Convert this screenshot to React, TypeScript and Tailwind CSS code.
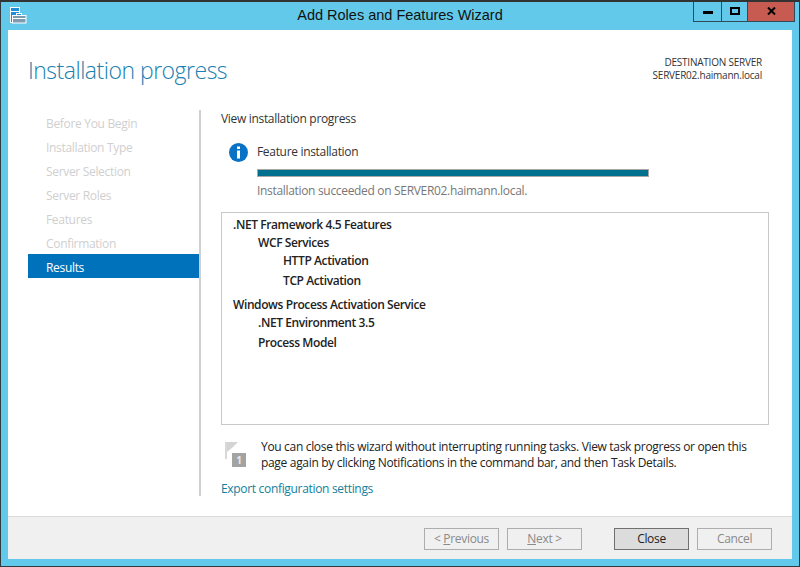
import React from "react";

const steps = [
  "Before You Begin",
  "Installation Type",
  "Server Selection",
  "Server Roles",
  "Features",
  "Confirmation",
];

const AppIcon = () => (
  <svg width="17" height="17" viewBox="0 0 17 17" className="block">
    <rect x="0.5" y="0.5" width="9" height="15" fill="#1f8fd8" stroke="#fff" />
    <rect x="1" y="4" width="8" height="1" fill="#fff" />
    <rect x="2.5" y="8.5" width="13.5" height="7.5" fill="#7f9bb0" stroke="#fff" />
    <rect x="6.5" y="6.5" width="5" height="2" fill="#1f8fd8" stroke="#fff" />
    <rect x="3" y="11" width="13" height="1" fill="#fff" />
  </svg>
);

const InfoIcon = () => (
  <svg width="19" height="19" viewBox="0 0 19 19" className="block">
    <circle cx="9.5" cy="9.5" r="9.5" fill="#0a72c4" />
    <rect x="8" y="3.5" width="3" height="2.5" fill="#fff" />
    <rect x="8" y="7.5" width="3" height="8" fill="#fff" />
  </svg>
);

const FlagIcon = () => (
  <svg width="22" height="27" viewBox="0 0 22 27" className="block">
    <rect x="0" y="1" width="2" height="17" fill="#d8d8d8" />
    <path d="M2 1 L13 1 L8 6 L2 11 Z" fill="#d4d4d4" />
    <rect x="7" y="12" width="14" height="14" fill="#a3a3a3" />
    <text x="14" y="23" textAnchor="middle" fontSize="10" fontWeight="700" fill="#e8e8e8" fontFamily="Open Sans">1</text>
  </svg>
);

const WizardButton = ({ children, primary }: { children: React.ReactNode; primary?: boolean }) => (
  <button
    className={
      primary
        ? "w-[75px] h-[22px] border border-[#707070] bg-[#dcdcdc] text-[12px] tracking-[-0.32px] text-[#222] leading-none"
        : "w-[75px] h-[22px] border border-[#adadad] bg-[#f0f0f0] text-[12px] tracking-[-0.32px] text-[#8a8a8a] leading-none"
    }
  >
    {children}
  </button>
);

const App = () => {
  return (
    <div className="w-[800px] h-[567px] flex flex-col bg-[#63c9ea] border-x border-b border-[#2f3b40] border-t-2 border-t-[#333] font-['Open_Sans',sans-serif] overflow-hidden">
      <div className="relative h-[28px] flex items-center justify-center shrink-0">
        <div className="absolute left-[9px] top-[5px]">
          <AppIcon />
        </div>
        <span className="text-[14.5px] text-[#111] font-['Liberation_Sans',sans-serif] mb-px">Add Roles and Features Wizard</span>
        <div className="absolute right-[4px] top-[-2px] flex h-[22px] border border-t-0 border-[#2f4a58]">
          <div className="w-[28px] flex items-center justify-center border-r border-[#2f4a58]">
            <div className="w-[10px] h-[3px] bg-black mt-[4px]" />
          </div>
          <div className="w-[26px] flex items-center justify-center border-r border-[#2f4a58]">
            <div className="w-[10px] h-[8px] border-2 border-black" />
          </div>
          <div className="w-[46px] flex items-center justify-center bg-[#c75b51]">
            <svg width="9" height="8" viewBox="0 0 9 8">
              <path d="M1 0.5 L8 7.5 M8 0.5 L1 7.5" stroke="#000" strokeWidth="2" />
            </svg>
          </div>
        </div>
      </div>

      <div className="flex-1 mx-[7px] mb-[7px] flex flex-col bg-white tracking-[-0.32px]">
        <div className="h-[80px] shrink-0 flex justify-between pl-[20px] pr-[30px]">
          <h1 className="mt-[24px] text-[23px] tracking-[-0.5px] leading-[33px] font-light text-[#1a80b0]">Installation progress</h1>
          <div className="mt-[26px] text-right text-[10px] tracking-[-0.22px] leading-[13px] text-[#333]">
            <div>DESTINATION SERVER</div>
            <div>SERVER02.haimann.local</div>
          </div>
        </div>

        <div className="flex h-[386px] shrink-0">
          <div className="w-[193px] shrink-0 border-r-2 border-[#d0d0d0] pl-[20px]">
            {steps.map((step) => (
              <div key={step} className="h-[24px] pl-[18px] pt-[4px] flex items-center text-[12px] text-[#cfcfcf]">
                {step}
              </div>
            ))}
            <div className="h-[24px] pl-[18px] pt-[4px] flex items-center text-[12px] text-white bg-[#0072bc]">Results</div>
          </div>

          <div className="flex-1 pl-[20px] pr-[23px] flex flex-col">
            <div className="h-[16px] mt-px shrink-0 flex items-center text-[12px] text-[#333]">View installation progress</div>
            <div className="flex mt-[16px] pl-[8px] shrink-0">
              <InfoIcon />
              <div className="ml-[9px]">
                <div className="text-[12px] leading-[18px] text-[#333]">Feature installation</div>
                <div className="mt-[8px] w-[392px] h-[8px] border border-[#a8a8a8] bg-[#00708f]" />
                <div className="mt-[6px] text-[12px] leading-[16px] text-[#777]">Installation succeeded on SERVER02.haimann.local.</div>
              </div>
            </div>
            <div className="mt-[13px] h-[213px] shrink-0 border border-[#c8c8c8] pl-[11px] pt-[3px] text-[12px] tracking-[-0.4px] text-[#222] font-semibold">
              <div className="h-[18px] leading-[18px]">.NET Framework 4.5 Features</div>
              <div className="h-[18px] leading-[18px] pl-[25px]">WCF Services</div>
              <div className="h-[18px] leading-[18px] pl-[50px]">HTTP Activation</div>
              <div className="h-[22px] leading-[22px] pl-[50px]">TCP Activation</div>
              <div className="h-[18px] mt-[4px] leading-[18px]">Windows Process Activation Service</div>
              <div className="h-[18px] leading-[18px] pl-[25px]">.NET Environment 3.5</div>
              <div className="h-[20px] mt-px leading-[20px] pl-[25px]">Process Model</div>
            </div>
            <div className="flex mt-[16px] pl-[4px] shrink-0">
              <FlagIcon />
              <p className="ml-[14px] mt-[-2px] text-[12px] leading-[16px] text-[#222] w-[500px]">
                You can close this wizard without interrupting running tasks. View task progress or open this page again by clicking Notifications in the command bar, and then Task Details.
              </p>
            </div>
            <a className="mt-[10px] shrink-0 text-[12px] leading-[16px] text-[#12809c]">Export configuration settings</a>
          </div>
        </div>

        <div className="mt-[20px] flex-1 border-t border-[#dcdcdc] bg-[#f0f0f0] flex items-center justify-end pr-[20px]">
          <div className="flex gap-[8px] mt-[2px]">
            <WizardButton>
              &lt; <span className="underline">P</span>revious
            </WizardButton>
            <WizardButton>
              <span className="underline">N</span>ext &gt;
            </WizardButton>
            <div className="w-[16px]" />
            <WizardButton primary>Close</WizardButton>
            <WizardButton>Cancel</WizardButton>
          </div>
        </div>
      </div>
    </div>
  );
};

export default App;
